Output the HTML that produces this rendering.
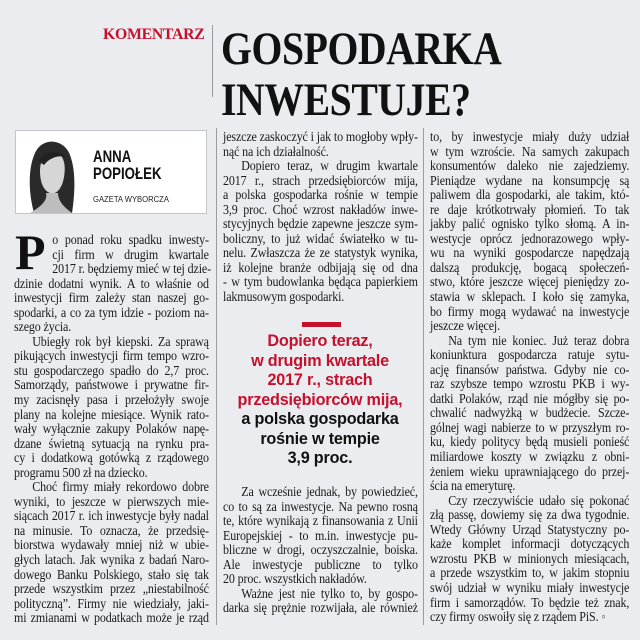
<!DOCTYPE html>
<html><head><meta charset="utf-8"><style>
*{margin:0;padding:0;box-sizing:border-box}
body{width:640px;height:640px;background:#eaecef;position:relative;overflow:hidden;font-family:"Liberation Serif",serif;color:#1a1a1a}
.col{position:absolute;font-size:13.8px;letter-spacing:-0.15px;transform:scaleX(0.87);transform-origin:left top}
.col div{height:14.55px;line-height:14.55px;white-space:nowrap;text-align:justify;text-align-last:justify}
.col div.e{text-align-last:left}
.col div.i{padding-left:21px}
.vl{position:absolute;width:1px;background:#9a9ca0}
.pq{position:absolute;left:222px;width:196px;text-align:center;font-family:"Liberation Sans",sans-serif;font-weight:bold;font-size:16.2px;line-height:19.5px;letter-spacing:-0.2px}
</style></head><body>
<div style="position:absolute;left:103px;top:26px;font-weight:bold;font-size:15.8px;color:#c5102e;letter-spacing:-0.3px">KOMENTARZ</div>
<div class="vl" style="left:212px;top:25px;height:72px"></div>
<div style="position:absolute;left:221px;top:24px;font-weight:bold;font-size:47px;line-height:51px;letter-spacing:-0.5px;transform:scaleX(0.845);transform-origin:left top;color:#111">GOSPODARKA<br>INWESTUJE?</div>

<div style="position:absolute;left:15px;top:130px;width:192px;height:84px;background:#fff;border:1px solid #c4c6c9">
<svg width="60" height="82" style="position:absolute;left:4px;top:0" viewBox="0 0 60 82">
<path d="M14 82 C8 60 8 35 16 20 C24 6 44 8 50 24 C56 40 55 62 52 82Z" fill="#2a2a2a"/>
<path d="M20 40 C20 26 28 20 36 22 C44 24 46 34 44 46 C42 58 36 64 30 62 C24 60 20 52 20 40Z" fill="#d6d6d6"/>
<path d="M18 30 C24 20 38 18 46 26 C40 24 30 26 24 34Z" fill="#222"/>
<path d="M26 62 C28 70 20 76 10 82 H52 C44 76 38 70 38 62Z" fill="#bdbdbd"/>
</svg>
<div style="position:absolute;left:77px;top:17px;font-family:'Liberation Sans',sans-serif;font-weight:bold;font-size:17px;line-height:17px;transform:scaleX(0.78);transform-origin:left top;color:#111">ANNA<br>POPIOŁEK</div>
<div style="position:absolute;left:77px;top:63px;font-family:'Liberation Sans',sans-serif;font-size:8.5px;color:#222;transform:scaleX(0.9);transform-origin:left top">GAZETA WYBORCZA</div>
</div>

<div class="vl" style="left:216px;top:128px;height:497px"></div>
<div class="vl" style="left:423px;top:128px;height:497px"></div>

<div style="position:absolute;left:15px;top:229px;font-weight:bold;font-size:50px;line-height:46px;color:#111">P</div>
<div class="col" style="left:14px;top:233px;width:224px">
<div style="padding-left:44px">o ponad roku spadku inwesty-</div>
<div style="padding-left:44px">cji firm w drugim kwartale</div>
<div style="padding-left:44px">2017 r. będziemy mieć w tej dzie-</div>
<div>dzinie dodatni wynik. A to właśnie od</div>
<div>inwestycji firm zależy stan naszej go-</div>
<div>spodarki, a co za tym idzie - poziom na-</div>
<div class="e">szego życia.</div>
<div class="i">Ubiegły rok był kiepski. Za sprawą</div>
<div>pikujących inwestycji firm tempo wzro-</div>
<div>stu gospodarczego spadło do 2,7 proc.</div>
<div>Samorządy, państwowe i prywatne fir-</div>
<div>my zacisnęły pasa i przełożyły swoje</div>
<div>plany na kolejne miesiące. Wynik rato-</div>
<div>wały wyłącznie zakupy Polaków napę-</div>
<div>dzane świetną sytuacją na rynku pra-</div>
<div>cy i dodatkową gotówką z rządowego</div>
<div class="e">programu 500 zł na dziecko.</div>
<div class="i">Choć firmy miały rekordowo dobre</div>
<div>wyniki, to jeszcze w pierwszych mie-</div>
<div>siącach 2017 r. ich inwestycje były nadal</div>
<div>na minusie. To oznacza, że przedsię-</div>
<div>biorstwa wydawały mniej niż w ubie-</div>
<div>głych latach. Jak wynika z badań Naro-</div>
<div>dowego Banku Polskiego, stało się tak</div>
<div>przede wszystkim przez „niestabilność</div>
<div>polityczną”. Firmy nie wiedziały, jaki-</div>
<div>mi zmianami w podatkach może je rząd</div>
</div>

<div class="col" style="left:223px;top:130px;width:224px">
<div>jeszcze zaskoczyć i jak to mogłoby wpły-</div>
<div class="e">nąć na ich działalność.</div>
<div class="i">Dopiero teraz, w drugim kwartale</div>
<div>2017 r., strach przedsiębiorców mija,</div>
<div>a polska gospodarka rośnie w tempie</div>
<div>3,9 proc. Choć wzrost nakładów inwe-</div>
<div>stycyjnych będzie zapewne jeszcze sym-</div>
<div>boliczny, to już widać światełko w tu-</div>
<div>nelu. Zwłaszcza że ze statystyk wynika,</div>
<div>iż kolejne branże odbijają się od dna</div>
<div>- w tym budowlanka będąca papierkiem</div>
<div class="e">lakmusowym gospodarki.</div>
</div>

<div style="position:absolute;left:302px;top:322px;width:39px;height:5px;background:#c5102e"></div>
<div class="pq" style="top:332px;color:#c5102e">Dopiero teraz,<br>w drugim kwartale<br>2017 r., strach<br>przedsiębiorców mija,</div>
<div class="pq" style="top:410px;color:#111">a polska gospodarka<br>rośnie w tempie<br>3,9 proc.</div>

<div class="col" style="left:223px;top:485px;width:224px">
<div class="i">Za wcześnie jednak, by powiedzieć,</div>
<div>co to są za inwestycje. Na pewno rosną</div>
<div>te, które wynikają z finansowania z Unii</div>
<div>Europejskiej - to m.in. inwestycje pu-</div>
<div>bliczne w drogi, oczyszczalnie, boiska.</div>
<div>Ale inwestycje publiczne to tylko</div>
<div class="e">20 proc. wszystkich nakładów.</div>
<div class="i">Ważne jest nie tylko to, by gospo-</div>
<div>darka się prężnie rozwijała, ale również</div>
</div>

<div class="col" style="left:430px;top:130px;width:229px">
<div>to, by inwestycje miały duży udział</div>
<div>w tym wzroście. Na samych zakupach</div>
<div>konsumentów daleko nie zajedziemy.</div>
<div>Pieniądze wydane na konsumpcję są</div>
<div>paliwem dla gospodarki, ale takim, któ-</div>
<div>re daje krótkotrwały płomień. To tak</div>
<div>jakby palić ognisko tylko słomą. A in-</div>
<div>westycje oprócz jednorazowego wpły-</div>
<div>wu na wyniki gospodarcze napędzają</div>
<div>dalszą produkcję, bogacą społeczeń-</div>
<div>stwo, które jeszcze więcej pieniędzy zo-</div>
<div>stawia w sklepach. I koło się zamyka,</div>
<div>bo firmy mogą wydawać na inwestycje</div>
<div class="e">jeszcze więcej.</div>
<div class="i">Na tym nie koniec. Już teraz dobra</div>
<div>koniunktura gospodarcza ratuje sytu-</div>
<div>ację finansów państwa. Gdyby nie co-</div>
<div>raz szybsze tempo wzrostu PKB i wy-</div>
<div>datki Polaków, rząd nie mógłby się po-</div>
<div>chwalić nadwyżką w budżecie. Szcze-</div>
<div>gólnej wagi nabierze to w przyszłym ro-</div>
<div>ku, kiedy politycy będą musieli ponieść</div>
<div>miliardowe koszty w związku z obni-</div>
<div>żeniem wieku uprawniającego do przej-</div>
<div class="e">ścia na emeryturę.</div>
<div class="i">Czy rzeczywiście udało się pokonać</div>
<div>złą passę, dowiemy się za dwa tygodnie.</div>
<div>Wtedy Główny Urząd Statystyczny po-</div>
<div>każe komplet informacji dotyczących</div>
<div>wzrostu PKB w minionych miesiącach,</div>
<div>a przede wszystkim to, w jakim stopniu</div>
<div>swój udział w wyniku miały inwestycje</div>
<div>firm i samorządów. To będzie też znak,</div>
<div class="e">czy firmy oswoiły się z rządem PiS. <span style="color:#555">◦</span></div>
</div>
</body></html>
